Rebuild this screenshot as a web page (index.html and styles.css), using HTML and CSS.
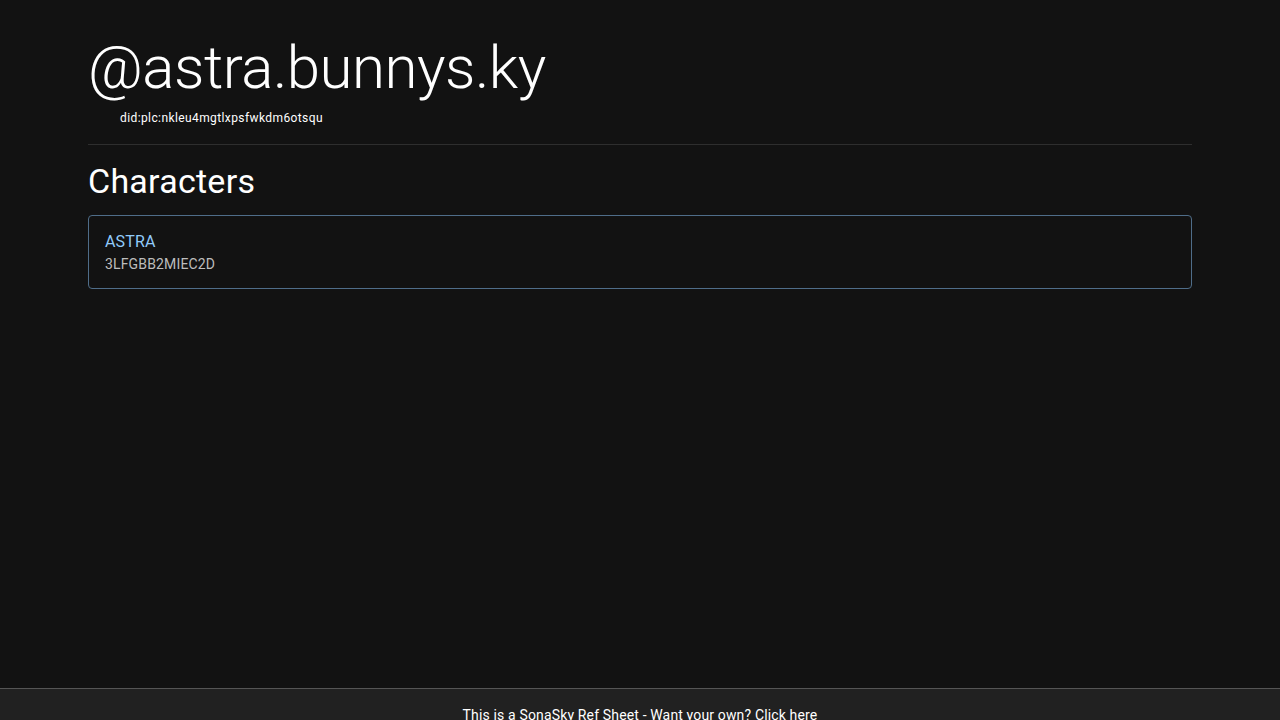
FILE: index.html
```html
<!DOCTYPE html>
<html lang="en">
<head>
<meta charset="utf-8">
<title>@astra.bunnys.ky</title>
<link rel="stylesheet" href="styles.css">
</head>
<body>
<main class="container">
  <header class="profile">
    <h1 class="handle">@astra.bunnys.ky</h1>
    <div class="did">did:plc:nkleu4mgtlxpsfwkdm6otsqu</div>
  </header>
  <hr class="divider">
  <h2 class="section-title">Characters</h2>
  <a class="card" href="#">
    <div class="card-name">ASTRA</div>
    <div class="card-id">3LFGBB2MIEC2D</div>
  </a>
</main>
<footer class="footer">
  <p class="footer-text">This is a SonaSky Ref Sheet - Want your own? Click here</p>
</footer>
</body>
</html>
```
FILE: styles.css
```css
html, body {
  margin: 0;
  padding: 0;
  height: 100%;
}
body {
  background: #121212;
  color: #ffffff;
  font-family: Roboto, "Liberation Sans", sans-serif;
  display: flex;
  flex-direction: column;
  overflow: hidden;
}
.container {
  flex: 1;
  width: 1104px;
  margin: 0 auto;
  padding-top: 32px;
}
.profile {
  display: flex;
  flex-direction: column;
}
.handle {
  margin: 0;
  font-weight: 300;
  font-size: 60px;
  line-height: 72px;
  letter-spacing: -0.5px;
}
.did {
  font-size: 12px;
  line-height: 20px;
  letter-spacing: 0.4px;
  padding-left: 32px;
  margin-top: 4px;
}
.divider {
  border: 0;
  border-top: 1px solid #2e2e2e;
  margin: 16px 0 15px;
}
.section-title {
  margin: 0 0 13px;
  font-weight: 400;
  font-size: 34px;
  line-height: 42px;
  letter-spacing: 0.25px;
}
.card {
  display: flex;
  flex-direction: column;
  gap: 2px;
  padding: 16px 16px 14px;
  border: 1px solid #4f6d89;
  border-radius: 4px;
  text-decoration: none;
}
.card-name {
  color: #90caf9;
  font-size: 16px;
  line-height: 20px;
  letter-spacing: 0.15px;
}
.card-id {
  color: #bdbdbd;
  font-size: 14px;
  line-height: 20px;
  letter-spacing: 0.15px;
}
.footer {
  background: #212121;
  border-top: 1px solid #555;
  height: 31px;
  text-align: center;
}
.footer-text {
  margin: 16px 0 0;
  font-size: 14px;
  line-height: 20px;
  letter-spacing: 0.15px;
}
```
